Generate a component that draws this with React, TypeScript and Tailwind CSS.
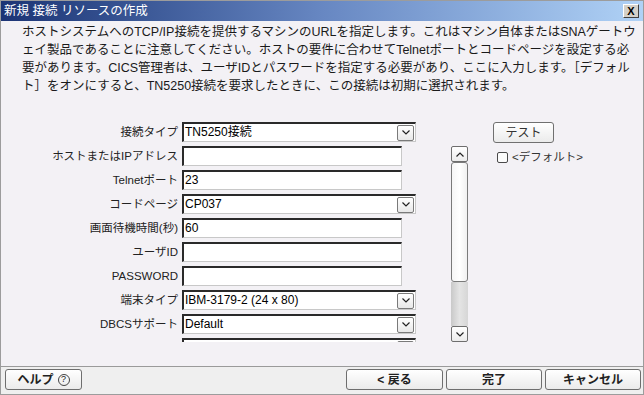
import React from "react";

const Chevron = ({ up = false }: { up?: boolean }) => (
  <svg width="8" height="5" viewBox="0 0 8 5" className="block">
    <polyline
      points={up ? "0.5,4.5 4,1 7.5,4.5" : "0.5,0.5 4,4 7.5,0.5"}
      fill="none"
      stroke="#222"
      strokeWidth="1.2"
    />
  </svg>
);

const TextBox = ({ value = "" }: { value?: string }) => (
  <div className="w-[220px] h-[20px] bg-white border-t-[2px] border-l-[2px] border-t-[#2a2a2a] border-l-[#2a2a2a] border-r border-b border-r-[#c8c8c8] border-b-[#c8c8c8] flex items-center pl-[1px] text-[12px] text-black leading-[17px]">
    {value}
  </div>
);

const SelectBox = ({ value }: { value: string }) => (
  <div className="w-[234px] h-[20px] bg-white border-t-[2px] border-l-[2px] border-t-[#2a2a2a] border-l-[#2a2a2a] border-r border-b border-r-[#c8c8c8] border-b-[#c8c8c8] flex items-center justify-between pl-[1px] pr-[1px] text-[12px] text-black leading-[17px]">
    <span>{value}</span>
    <div className="w-[17px] h-[16px] rounded-[2px] border border-[#7a7a7a] bg-gradient-to-b from-white to-[#e8e8e8] flex items-center justify-center">
      <Chevron />
    </div>
  </div>
);

const Row = ({ label, children }: { label: string; children: React.ReactNode }) => (
  <div className="flex items-center h-[20px] shrink-0">
    <div className="w-[177px] h-[20px] text-right text-[11.5px] text-[#222] whitespace-nowrap leading-[21px]">{label}</div>
    <div className="ml-[4px]">{children}</div>
  </div>
);

const BottomButton = ({ children, w }: { children: React.ReactNode; w: string }) => (
  <div
    className={`${w} h-[21px] rounded-[3px] border border-[#6e6e6e] bg-gradient-to-b from-white to-[#ebebeb] flex items-center justify-center text-[12px] font-bold text-[#222] leading-none`}
  >
    {children}
  </div>
);

export default function App() {
  return (
    <div className="w-[644px] h-[395px] flex flex-col overflow-hidden border border-[#9c9c9c] bg-[#f3f1f5] font-['Liberation_Sans','Noto_Sans_CJK_JP',sans-serif]">
      {/* title bar */}
      <div className="h-[20px] shrink-0 flex items-center justify-between pl-[3px] pr-[4px] bg-gradient-to-r from-[#1c3475] via-[#6787c2] to-[#b0d2f6]">
        <span className="text-white text-[12.5px] leading-none whitespace-nowrap">新規 接続 リソースの作成</span>
        <div className="w-[16px] h-[14px] bg-[#d4d0c8] border border-t-white border-l-white border-r-[#404040] border-b-[#404040] flex items-center justify-center text-[11px] font-bold text-black leading-none">
          X
        </div>
      </div>

      {/* body */}
      <div className="flex-1 flex flex-col">
        <div className="pl-[21px] pt-[2px] text-[12.5px] leading-[18px] text-[#1a1a1a] whitespace-nowrap">
          <div>ホストシステムへのTCP/IP接続を提供するマシンのURLを指定します。これはマシン自体またはSNAゲートウ</div>
          <div>ェイ製品であることに注意してください。ホストの要件に合わせてTelnetポートとコードページを設定する必</div>
          <div>要があります。CICS管理者は、ユーザIDとパスワードを指定する必要があり、ここに入力します。［デフォル</div>
          <div>ト］をオンにすると、TN5250接続を要求したときに、この接続は初期に選択されます。</div>
        </div>

        <div className="flex mt-[27px]">
          {/* form column */}
          <div className="w-[415px] h-[220px] overflow-hidden flex flex-col gap-[4px]">
            <Row label="接続タイプ"><SelectBox value="TN5250接続" /></Row>
            <Row label="ホストまたはIPアドレス"><TextBox /></Row>
            <Row label="Telnetポート"><TextBox value="23" /></Row>
            <Row label="コードページ"><SelectBox value="CP037" /></Row>
            <Row label="画面待機時間(秒)"><TextBox value="60" /></Row>
            <Row label="ユーザID"><TextBox /></Row>
            <Row label="PASSWORD"><TextBox /></Row>
            <Row label="端末タイプ"><SelectBox value="IBM-3179-2 (24 x 80)" /></Row>
            <Row label="DBCSサポート"><SelectBox value="Default" /></Row>
            <Row label=""><SelectBox value="" /></Row>
          </div>

          {/* scrollbar */}
          <div className="ml-[35px] mt-[24px] w-[17px] h-[196px] flex flex-col">
            <div className="h-[16px] rounded-[2px] border border-[#6e6e6e] bg-gradient-to-b from-white to-[#ececec] flex items-center justify-center">
              <Chevron up />
            </div>
            <div className="h-[120px] rounded-[3px] border border-[#7a7a7a] bg-gradient-to-r from-[#f6f6f6] via-white to-[#f0f0f0]" />
            <div className="flex-1 bg-gradient-to-r from-[#c9c9c9] via-[#e4e4e4] to-[#d6d6d6]" />
            <div className="h-[16px] rounded-[2px] border border-[#6e6e6e] bg-gradient-to-b from-white to-[#ececec] flex items-center justify-center">
              <Chevron />
            </div>
          </div>

          {/* right column */}
          <div className="ml-[25px] flex flex-col">
            <div className="w-[61px] h-[21px] rounded-[3px] border border-[#707070] bg-gradient-to-b from-white to-[#ebebeb] flex items-center justify-center text-[12px] text-[#333] leading-none">
              テスト
            </div>
            <div className="flex items-center mt-[9px] ml-[4px]">
              <div className="w-[11px] h-[11px] rounded-[2px] border border-[#4a4a4a] bg-[#fbfbfb]" />
              <span className="ml-[4px] text-[11.5px] text-[#333] leading-none whitespace-nowrap">&lt;デフォルト&gt;</span>
            </div>
          </div>
        </div>
      </div>

      {/* bottom bar */}
      <div className="h-[28px] shrink-0 border-t border-[#9a9a9a] bg-[#efefef] flex items-start pt-[2px] pl-[4px] pr-[2px]">
        <BottomButton w="w-[77px]">
          <span>ヘルプ</span>
          <span className="ml-[4px] w-[12px] h-[12px] rounded-full border border-[#444] flex items-center justify-center text-[9px] font-normal leading-none">?</span>
        </BottomButton>
        <div className="flex-1" />
        <div className="flex gap-[3px]">
          <BottomButton w="w-[97px]">&lt; 戻る</BottomButton>
          <BottomButton w="w-[96px]">完了</BottomButton>
          <BottomButton w="w-[96px]">キャンセル</BottomButton>
        </div>
      </div>
    </div>
  );
}
